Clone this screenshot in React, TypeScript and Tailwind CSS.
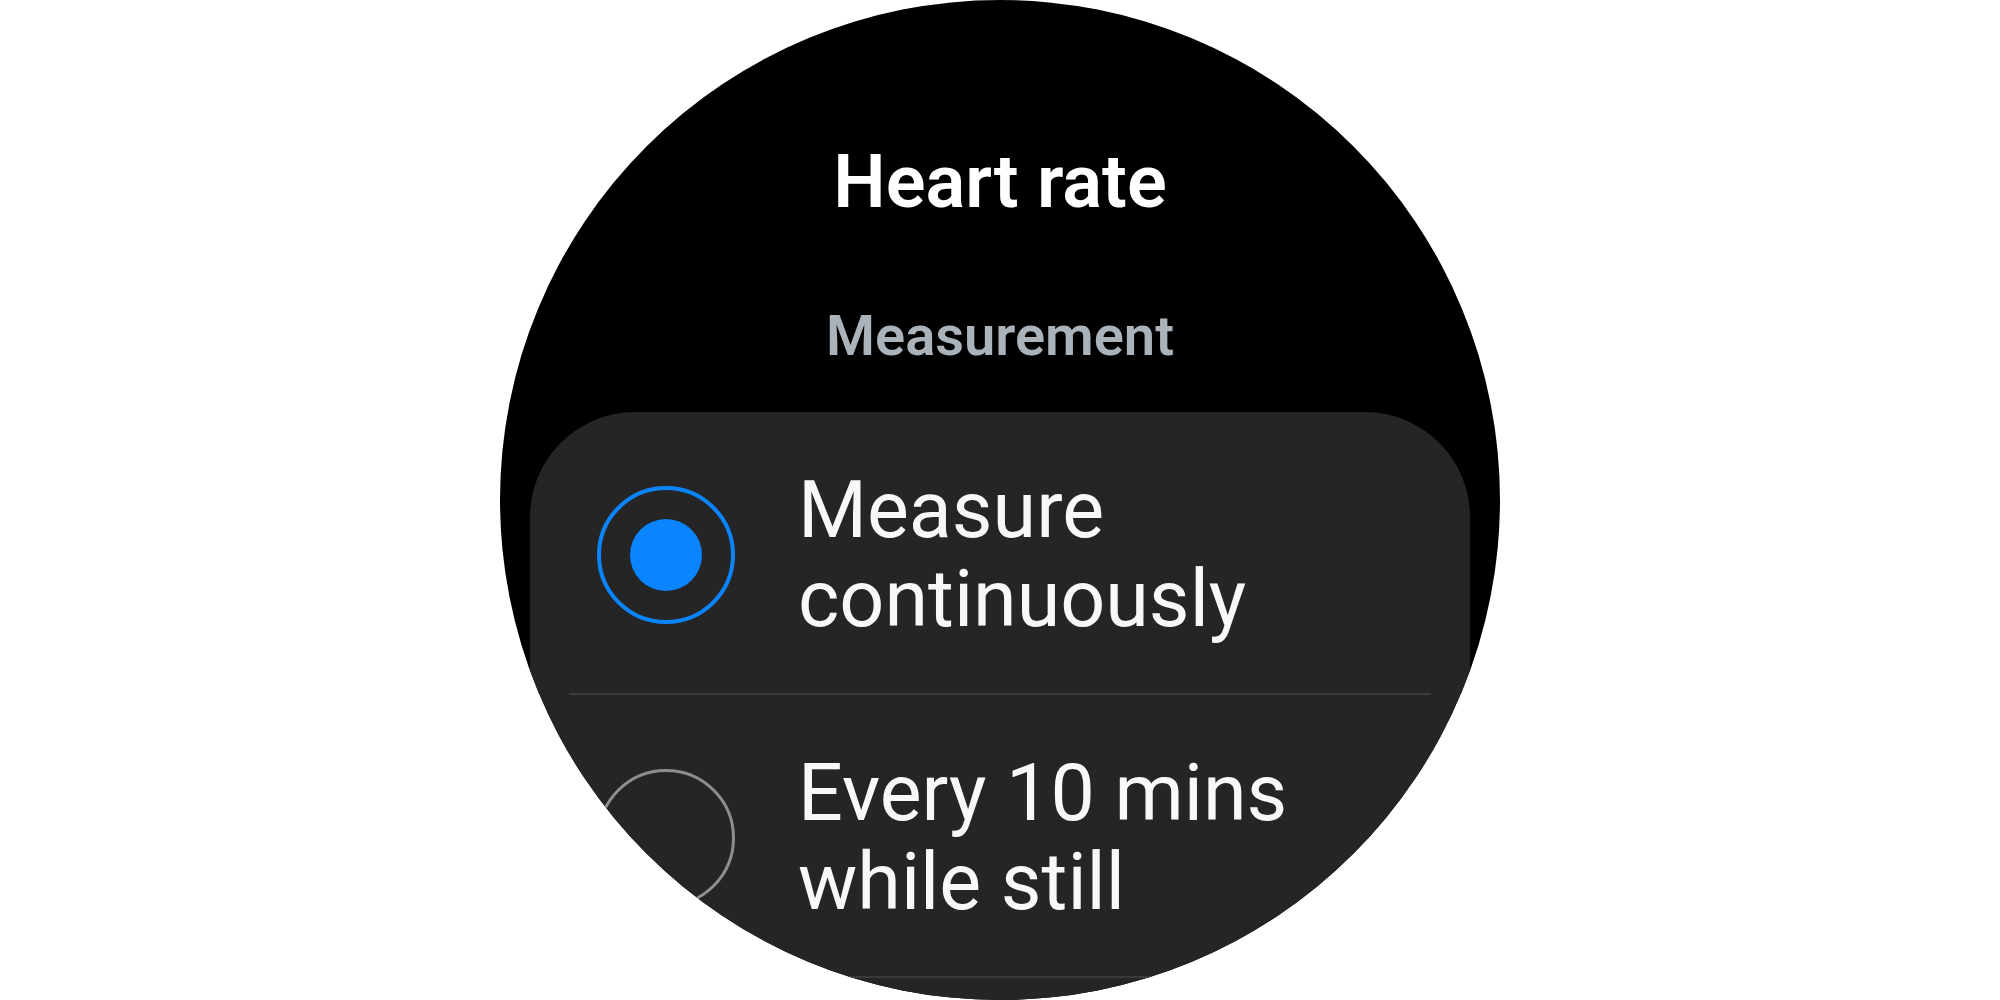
import { useState } from "react";

interface Option {
  id: string;
  lines: string[];
}

const options: Option[] = [
  { id: "continuous", lines: ["Measure", "continuously"] },
  { id: "ten-mins", lines: ["Every 10 mins", "while still"] },
];

const RadioMark = ({ checked }: { checked: boolean }) => {
  if (checked) {
    return (
      <div className="flex h-[138px] w-[138px] shrink-0 items-center justify-center rounded-full border-[4px] border-[#0a84ff]">
        <div className="h-[72px] w-[72px] rounded-full bg-[#0a84ff]" />
      </div>
    );
  }
  return (
    <div className="h-[138px] w-[138px] shrink-0 rounded-full border-[3px] border-[#8e8e8e]" />
  );
};

export default function App() {
  const [selected, setSelected] = useState("continuous");

  return (
    <div className="flex h-[1000px] w-[2000px] justify-center bg-white font-['Roboto',sans-serif]">
      {/* round watch face */}
      <div className="flex h-[1000px] w-[1000px] flex-col items-center overflow-hidden rounded-full bg-black">
        <h1 className="pt-[145px] text-[74px] font-semibold leading-none text-white">
          Heart rate
        </h1>
        <h2 className="mt-[89px] text-[56px] font-semibold leading-none text-[#aab2ba]">
          Measurement
        </h2>

        <div className="mt-[48px] w-[940px] flex-1 shrink-0 rounded-t-[105px] bg-[#252525]">
          {options.map((option) => (
            <div key={option.id}>
              <button
                type="button"
                onClick={() => setSelected(option.id)}
                className="flex h-[281px] w-full items-center gap-[63px] pl-[67px] pt-[4px] text-left"
              >
                <RadioMark checked={selected === option.id} />
                <span className="text-[79px] leading-[89px] text-[#f8f8f8]">
                  {option.lines.map((line) => (
                    <span key={line} className="block">
                      {line}
                    </span>
                  ))}
                </span>
              </button>
              <div className="mx-[39px] h-[2px] bg-[#3a3a3a]" />
            </div>
          ))}
        </div>
      </div>
    </div>
  );
}
